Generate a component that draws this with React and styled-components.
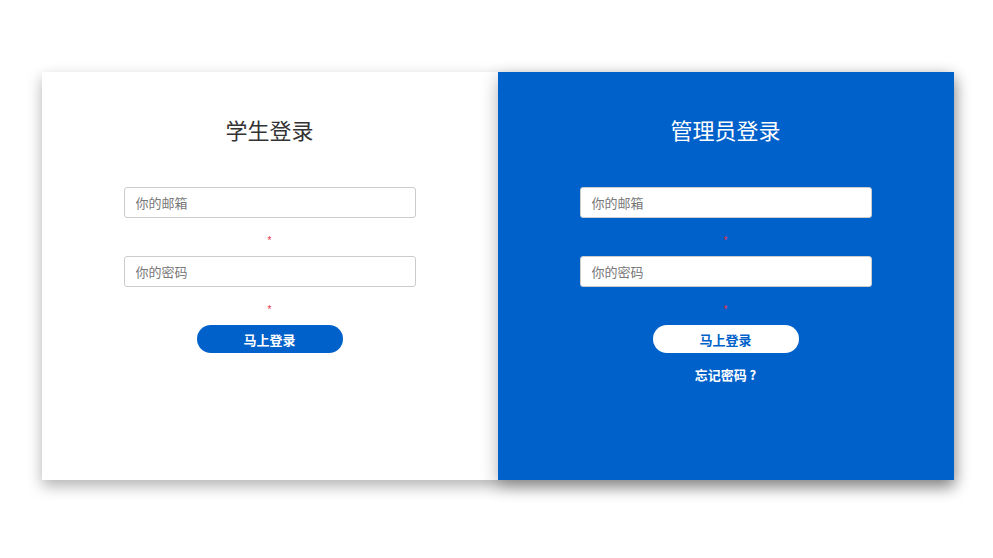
import React from 'react'
import styled, { createGlobalStyle } from 'styled-components'

const Global = createGlobalStyle`
  html, body {
    margin: 0;
    padding: 0;
    background: #fff;
  }
  body {
    font-family: "Noto Sans", "Noto Sans CJK SC", sans-serif;
  }
`

const Page = styled.div`
  padding: 72px 0 40px 2px;
  display: flex;
  justify-content: center;
`

const Card = styled.div`
  width: 912px;
  height: 408px;
  display: grid;
  grid-template-columns: 1fr 1fr;
  box-shadow: 0 6px 14px rgba(0, 0, 0, 0.3);
`

const Panel = styled.div`
  position: relative;
  z-index: ${p => (p.$dark ? 1 : 0)};
  background: ${p => (p.$dark ? '#0061ca' : '#fff')};
  box-shadow: ${p => (p.$dark ? '0 6px 16px rgba(0, 0, 0, 0.3)' : 'none')};
  display: flex;
  flex-direction: column;
  align-items: center;
`

const Title = styled.h2`
  margin: 42px 0 43px;
  font-size: 22px;
  line-height: 30px;
  font-weight: 400;
  color: ${p => (p.$dark ? '#fff' : '#333')};
  font-family: "Noto Sans CJK SC", sans-serif;
`

const Input = styled.input`
  box-sizing: border-box;
  width: 292px;
  height: 31px;
  padding: 0 11px;
  border: 1px solid #ccc;
  border-radius: 3px;
  background: #fff;
  font-size: 13px;
  font-family: "Noto Sans CJK SC", sans-serif;
  color: #555;
  outline: none;
  &::placeholder {
    color: #777;
  }
`

const Hint = styled.div`
  box-sizing: border-box;
  height: 38px;
  padding-top: 18px;
  font-size: 10px;
  line-height: 10px;
  color: #e8304a;
  font-family: "Liberation Sans", sans-serif;
`

const Button = styled.button`
  width: 146px;
  height: 28px;
  border: none;
  border-radius: 14px;
  background: ${p => (p.$dark ? '#fff' : '#0061ca')};
  color: ${p => (p.$dark ? '#0061ca' : '#fff')};
  font-size: 13px;
  font-weight: 700;
  font-family: "Noto Sans CJK SC", sans-serif;
  cursor: pointer;
`

const Forgot = styled.a`
  margin-top: 12px;
  font-size: 13px;
  line-height: 20px;
  font-weight: 700;
  color: #fff;
  text-decoration: none;
  font-family: "Noto Sans CJK SC", sans-serif;
`

const LoginForm = ({ title, dark, forgot }) => (
  <Panel $dark={dark}>
    <Title $dark={dark}>{title}</Title>
    <Input placeholder="你的邮箱" />
    <Hint>*</Hint>
    <Input type="password" placeholder="你的密码" />
    <Hint>*</Hint>
    <Button $dark={dark}>马上登录</Button>
    {forgot && <Forgot href="#">忘记密码 ?</Forgot>}
  </Panel>
)

export default function App() {
  return (
    <>
      <Global />
      <Page>
        <Card>
          <LoginForm title="学生登录" />
          <LoginForm title="管理员登录" dark forgot />
        </Card>
      </Page>
    </>
  )
}
